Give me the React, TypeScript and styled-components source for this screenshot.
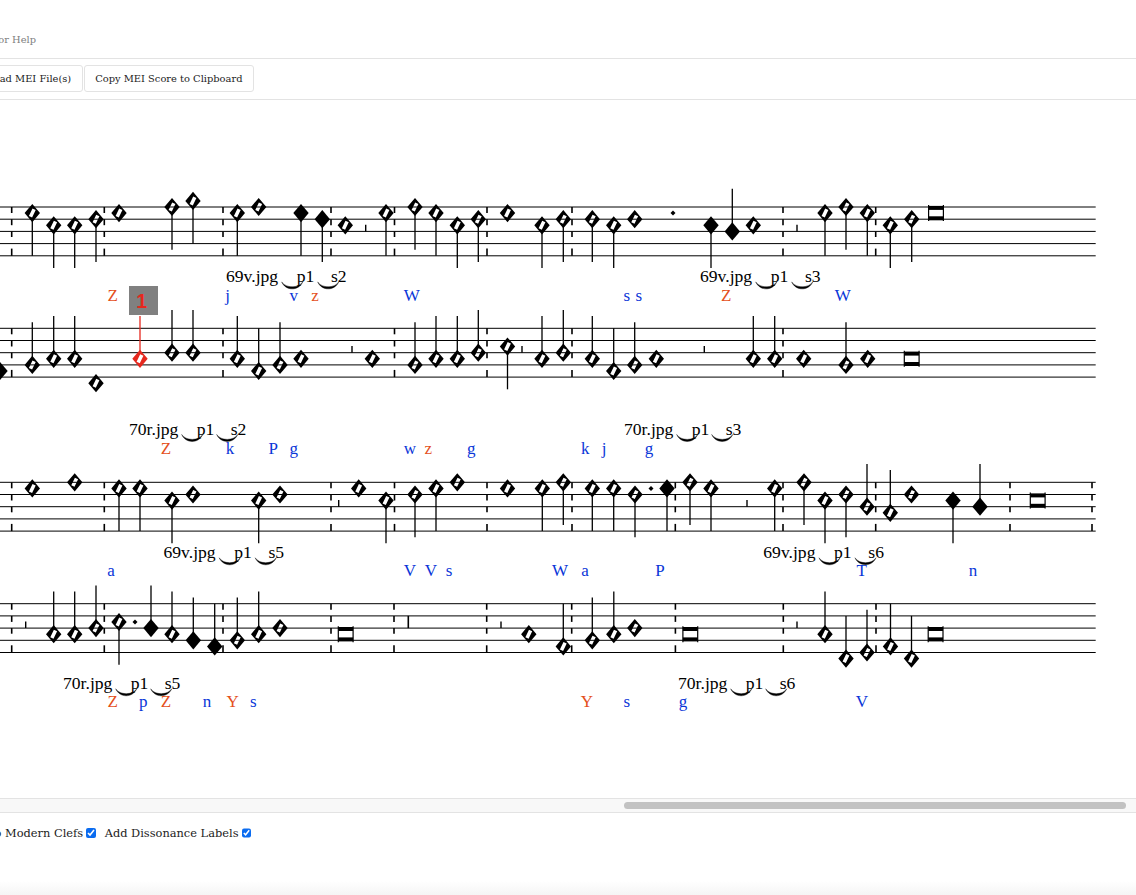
import React from 'react';
import styled, { createGlobalStyle } from 'styled-components';

type NoteKind = 'v' | 'vd' | 'vu' | 'f' | 'fd' | 'fu';
type Note = [number, number, NoteKind];

type System = {
  top: number;
  bars: number[];
  notes: Note[];
  rests: number[];
  longRests?: number[];
  dots?: [number, number][];
  breves: [number, number][];
};

type Source = { name: string; x: number; y: number; part: string };
type Label = [number, string, boolean?];

const STEP = 6.1;
const STEM = 42.7;

const systems: System[] = [
  {
    top: 207,
    bars: [11.7, 104.3, 223, 331, 394.5, 487, 572, 783, 875.7],
    notes: [
      [32.3, 1, 'vd'], [53.7, 3, 'vd'], [74.7, 3, 'vd'], [96, 2, 'vd'], [119, 1, 'v'],
      [172, 0, 'vd'], [193, -1, 'vd'], [237.3, 1, 'vd'], [258.7, 0, 'v'], [301, 1, 'fd'],
      [322.3, 2, 'fd'], [345.3, 3, 'v'], [386, 1, 'vd'], [415, 0, 'vd'], [436, 1, 'vd'],
      [457.3, 3, 'vd'], [478.3, 2, 'vd'], [507.5, 1, 'v'], [542, 3, 'vd'], [563.3, 2, 'vd'],
      [592.3, 2, 'vd'], [613.7, 3, 'vd'], [634.7, 2, 'v'], [711, 3, 'fd'], [732.3, 4, 'fu'],
      [753.3, 3, 'v'], [825, 1, 'vd'], [846, 0, 'vd'], [867.3, 1, 'vd'], [890.3, 3, 'vd'],
      [911.7, 2, 'vd'],
    ],
    rests: [365.7, 797],
    dots: [[673, 1]],
    breves: [[936, 1]],
  },
  {
    top: 328.3,
    bars: [11.7, 223, 394.5, 487, 572, 783],
    notes: [
      [0, 7, 'f'], [32.3, 6, 'vu'], [53.7, 5, 'vu'], [74.7, 5, 'vu'], [96, 9, 'v'],
      [172, 4, 'vu'], [193, 4, 'vu'], [237.3, 5, 'vu'], [258.7, 7, 'vu'], [280, 6, 'vu'],
      [301, 5, 'v'], [372.3, 5, 'v'], [415, 6, 'vu'], [436, 5, 'vu'], [457.3, 5, 'vu'],
      [478.3, 4, 'vu'], [507.5, 3, 'vd'], [542, 5, 'vu'], [563.3, 4, 'vu'], [592.3, 5, 'vu'],
      [613.7, 7, 'vu'], [634.7, 6, 'vu'], [656.3, 5, 'v'], [753.3, 5, 'vu'], [774.7, 5, 'vu'],
      [803.7, 5, 'v'], [846, 6, 'vu'], [867.7, 5, 'v'],
    ],
    rests: [352, 522, 704.3],
    breves: [[911.7, 5]],
  },
  {
    top: 482.3,
    bars: [11.7, 104.3, 331, 394.5, 487, 572, 675.3, 783, 875.7, 1010, 1092],
    notes: [
      [32.3, 1, 'v'], [74.7, 0, 'v'], [119, 1, 'vd'], [140, 1, 'vd'], [172, 3, 'vd'],
      [193, 2, 'v'], [258.7, 3, 'vd'], [280, 2, 'v'], [358.7, 1, 'v'], [386, 3, 'vd'],
      [415, 2, 'vd'], [436, 1, 'vd'], [457.3, 0, 'v'], [507.5, 1, 'v'], [542.3, 1, 'vd'],
      [563.3, 0, 'vd'], [592.3, 1, 'vd'], [613.7, 1, 'vd'], [635, 2, 'vd'], [667, 1, 'fd'],
      [690, 0, 'vd'], [711, 1, 'vd'], [774.7, 1, 'vd'], [804, 0, 'vd'], [825, 3, 'vd'],
      [846, 2, 'vd'], [867, 4, 'vu'], [890.3, 5, 'vu'], [911.5, 2, 'v'], [953, 3, 'fd'],
      [980, 4, 'fu'],
    ],
    rests: [338.7, 747],
    dots: [[651, 1]],
    breves: [[1037.7, 3]],
  },
  {
    top: 603.7,
    bars: [11.7, 104.3, 223, 331, 394, 486.7, 571.7, 675.4, 783.3, 876],
    notes: [
      [53.7, 5, 'vu'], [74.7, 5, 'vu'], [96, 4, 'vu'], [119, 3, 'vd'], [151, 4, 'fu'],
      [172, 5, 'vu'], [193.3, 6, 'fu'], [214.7, 7, 'fu'], [237.3, 6, 'vu'], [258.7, 5, 'vu'],
      [280, 4, 'v'], [528.8, 5, 'v'], [563.3, 7, 'vu'], [592.3, 6, 'vu'], [613.8, 5, 'vu'],
      [634.8, 4, 'v'], [825, 5, 'vu'], [846, 9, 'vu'], [867, 8, 'vu'], [890.5, 7, 'vu'],
      [911.5, 9, 'vu'],
    ],
    rests: [25.7, 501, 797],
    longRests: [408.3],
    dots: [[135, 3]],
    breves: [[345.7, 5], [690.3, 5], [935.6, 5]],
  },
];

const sources: Source[] = [
  { name: '69v.jpg', x: 226, y: 282.4, part: 's2' },
  { name: '69v.jpg', x: 700, y: 282.4, part: 's3' },
  { name: '70r.jpg', x: 129, y: 435, part: 's2' },
  { name: '70r.jpg', x: 624, y: 435, part: 's3' },
  { name: '69v.jpg', x: 163.5, y: 558.3, part: 's5' },
  { name: '69v.jpg', x: 763.3, y: 558.3, part: 's6' },
  { name: '70r.jpg', x: 63, y: 689.3, part: 's5' },
  { name: '70r.jpg', x: 678, y: 689.3, part: 's6' },
];

const labelRows: { y: number; items: Label[] }[] = [
  {
    y: 301,
    items: [
      [112.7, 'Z', true], [227.7, 'j'], [293.7, 'v'], [315, 'z', true], [411.7, 'W'],
      [626.7, 's'], [638.7, 's'], [726.3, 'Z', true], [842.7, 'W'],
    ],
  },
  {
    y: 453.7,
    items: [
      [166, 'Z', true], [230, 'k'], [273.3, 'P'], [293.7, 'g'], [410, 'w'],
      [428.3, 'z', true], [471.3, 'g'], [585.3, 'k'], [604, 'j'], [649, 'g'],
    ],
  },
  {
    y: 576,
    items: [
      [111, 'a'], [410, 'V'], [431, 'V'], [449, 's'], [560, 'W'],
      [585, 'a'], [660, 'P'], [861.7, 'T'], [973, 'n'],
    ],
  },
  {
    y: 707,
    items: [
      [112.7, 'Z', true], [143.3, 'p'], [166, 'Z', true], [207, 'n'], [232.7, 'Y', true],
      [253.3, 's'], [587, 'Y', true], [626.8, 's'], [683, 'g'], [861.8, 'V'],
    ],
  },
];

function NoteHead({ x, y, filled, color }: { x: number; y: number; filled: boolean; color: string }) {
  const outer = 'M-7.7 0L0 -9.1L7.7 0L0 9.1Z';
  const slit = 'M0.2 -4.5L3.4 -3L-0.2 4.5L-3.4 3Z';
  return (
    <path
      transform={`translate(${x} ${y})`}
      d={filled ? outer : outer + slit}
      fill={color}
      fillRule="evenodd"
    />
  );
}

function ScoreNote({ note, top, color = '#000' }: { note: Note; top: number; color?: string }) {
  const [x, step, kind] = note;
  const y = top + step * STEP;
  const end = kind.endsWith('d') ? y + STEM : kind.endsWith('u') ? y - STEM : y;
  const start = kind.endsWith('d') ? y + 7 : y - 7;
  return (
    <g>
      {end !== y && <line x1={x} x2={x} y1={start} y2={end} stroke={color} strokeWidth={1.3} />}
      <NoteHead x={x} y={y} filled={kind.startsWith('f')} color={color} />
    </g>
  );
}

function DashedBar({ x, top }: { x: number; top: number }) {
  const dashes = [[0, 6], [12.2, 18.2], [24.4, 30], [41.6, 48.8]];
  return (
    <g>
      {dashes.map(([a, b]) => (
        <line key={a} x1={x} x2={x} y1={top + a} y2={top + b} stroke="#000" strokeWidth={1.6} />
      ))}
    </g>
  );
}

function Breve({ x, y }: { x: number; y: number }) {
  return (
    <g transform={`translate(${x} ${y})`}>
      <line x1={-7.4} x2={-7.4} y1={-8} y2={8} stroke="#000" strokeWidth={1.2} />
      <line x1={7.4} x2={7.4} y1={-8} y2={8} stroke="#000" strokeWidth={1.2} />
      <rect x={-7.4} y={-7.2} width={14.8} height={4} fill="#000" />
      <rect x={-7.4} y={3.2} width={14.8} height={4} fill="#000" />
    </g>
  );
}

function Tie({ x, y }: { x: number; y: number }) {
  return (
    <path
      transform={`translate(${x} ${y})`}
      d="M0 -0.5C4 8.8 17 8.8 21 -0.5C17 6 4 6 0 -0.5Z"
      fill="#000"
      stroke="#000"
      strokeWidth={0.4}
    />
  );
}

function SourceRef({ name, x, y, part }: Source) {
  const early = name.startsWith('70');
  const p = early ? 67.7 : 70.7;
  const s = early ? 101.7 : 105;
  const tie1 = early ? 52.7 : 55.7;
  const tie2 = early ? 87.7 : 91.7;
  return (
    <g>
      <SourceText x={x} y={y}>{name}</SourceText>
      <Tie x={x + tie1} y={y} />
      <SourceText x={x + p} y={y}>p1</SourceText>
      <Tie x={x + tie2} y={y} />
      <SourceText x={x + s} y={y}>{part}</SourceText>
    </g>
  );
}

export default function App() {
  return (
    <>
      <GlobalStyle />
      <Page>
        <Header>
          <HelpLink>Click for Help</HelpLink>
        </Header>
        <Toolbar>
          <ToolButton>Load MEI File(s)</ToolButton>
          <ToolButton>Copy MEI Score to Clipboard</ToolButton>
        </Toolbar>
        <ScoreArea>
          <Score viewBox="0 100 1136 698" width={1136} height={698}>
            {systems.map((system) => (
              <g key={system.top}>
                {[0, 1, 2, 3, 4].map((line) => (
                  <line
                    key={line}
                    x1={0}
                    x2={1095.7}
                    y1={system.top + line * 12.2}
                    y2={system.top + line * 12.2}
                    stroke="#000"
                    strokeWidth={1}
                  />
                ))}
                {system.bars.map((x) => (
                  <DashedBar key={x} x={x} top={system.top} />
                ))}
                {system.rests.map((x) => (
                  <line
                    key={x}
                    x1={x}
                    x2={x}
                    y1={system.top + 4 * STEP - 6.6}
                    y2={system.top + 4 * STEP}
                    stroke="#000"
                    strokeWidth={1.4}
                  />
                ))}
                {system.longRests?.map((x) => (
                  <line
                    key={x}
                    x1={x}
                    x2={x}
                    y1={system.top + 2 * STEP}
                    y2={system.top + 4 * STEP}
                    stroke="#000"
                    strokeWidth={1.6}
                  />
                ))}
                {system.dots?.map(([x, step]) => (
                  <path
                    key={x}
                    transform={`translate(${x} ${system.top + step * STEP})`}
                    d="M-2.5 0L0 -2.5L2.5 0L0 2.5Z"
                    fill="#000"
                  />
                ))}
                {system.notes.map((note) => (
                  <ScoreNote key={note[0]} note={note} top={system.top} />
                ))}
                {system.breves.map(([x, step]) => (
                  <Breve key={x} x={x} y={system.top + step * STEP} />
                ))}
              </g>
            ))}

            <ScoreNote note={[140, 5, 'vu']} top={328.3} color="#e5281e" />
            <rect x={129} y={286} width={29} height={29} fill="#808080" />
            <MarkerNumber x={141.7} y={308}>1</MarkerNumber>

            {sources.map((source) => (
              <SourceRef key={`${source.name}${source.part}`} {...source} />
            ))}

            {labelRows.map((row) =>
              row.items.map(([x, text, dissonant]) => (
                <LabelText key={`${row.y}${x}`} x={x} y={row.y} $dissonant={!!dissonant}>
                  {text}
                </LabelText>
              )),
            )}
          </Score>
        </ScoreArea>
        <ScrollTrack>
          <ScrollThumb />
        </ScrollTrack>
        <Options>
          <Option>
            Switch to Modern Clefs
            <Check type="checkbox" defaultChecked />
          </Option>
          <Option>
            Add Dissonance Labels
            <Check type="checkbox" defaultChecked />
          </Option>
        </Options>
        <BottomFade />
      </Page>
    </>
  );
}

const GlobalStyle = createGlobalStyle`
  html, body {
    margin: 0;
    padding: 0;
    background: #fff;
    overflow: hidden;
  }
`;

const Page = styled.div`
  display: flex;
  flex-direction: column;
  width: 1136px;
  height: 895px;
  overflow: hidden;
  font-family: 'DejaVu Serif', 'Liberation Serif', serif;
`;

const Header = styled.div`
  display: flex;
  flex: none;
  align-items: center;
  justify-content: flex-end;
  box-sizing: border-box;
  width: 100%;
  height: 59px;
  padding: 20px 1100px 0 0;
  border-bottom: 1px solid #e3e3e3;
`;

const HelpLink = styled.span`
  font-size: 9.9px;
  color: #808080;
  white-space: nowrap;
`;

const Toolbar = styled.div`
  display: flex;
  flex: none;
  align-items: center;
  justify-content: flex-end;
  box-sizing: border-box;
  width: 100%;
  height: 41px;
  padding: 0 882px 1px 0;
  gap: 1px;
  border-bottom: 1px solid #e3e3e3;
`;

const ToolButton = styled.button`
  flex: none;
  box-sizing: border-box;
  height: 27px;
  padding: 0 10.5px;
  border: 1px solid #e3e3e3;
  border-radius: 3px;
  background: #fff;
  color: #222;
  font-family: inherit;
  font-size: 9.9px;
  white-space: nowrap;
`;

const ScoreArea = styled.div`
  flex: none;
  height: 698px;
`;

const Score = styled.svg`
  display: block;
`;

const SourceText = styled.text`
  font-family: 'Liberation Serif', serif;
  font-size: 17.6px;
  fill: #000;
`;

const LabelText = styled.text<{ $dissonant: boolean }>`
  font-family: 'Liberation Serif', serif;
  font-size: 17px;
  text-anchor: middle;
  fill: ${(p) => (p.$dissonant ? '#e4501c' : '#0a36d8')};
`;

const MarkerNumber = styled.text`
  font-family: 'Liberation Sans', sans-serif;
  font-size: 19.5px;
  font-weight: 700;
  text-anchor: middle;
  fill: #e5281e;
`;

const ScrollTrack = styled.div`
  flex: none;
  box-sizing: border-box;
  height: 15px;
  padding: 3px 0 0 624px;
  background: #f8f8f8;
  border-top: 1px solid #e3e3e3;
  border-bottom: 1px solid #e3e3e3;
`;

const ScrollThumb = styled.div`
  width: 502px;
  height: 7px;
  border-radius: 4px;
  background: #c2c2c2;
`;

const Options = styled.div`
  display: flex;
  flex: none;
  align-items: center;
  justify-content: flex-end;
  gap: 9px;
  box-sizing: border-box;
  height: 42px;
  padding: 0 885px 2px 0;
`;

const Option = styled.label`
  display: flex;
  flex: none;
  align-items: center;
  gap: 3px;
  font-size: 11.4px;
  color: #222;
  white-space: nowrap;
`;

const Check = styled.input`
  width: 9.5px;
  height: 9.5px;
  margin: 0;
  accent-color: #0b6cf0;
`;

const BottomFade = styled.div`
  flex: 1;
  background: linear-gradient(to bottom, #fff 65%, #f5f5f5 100%);
`;
